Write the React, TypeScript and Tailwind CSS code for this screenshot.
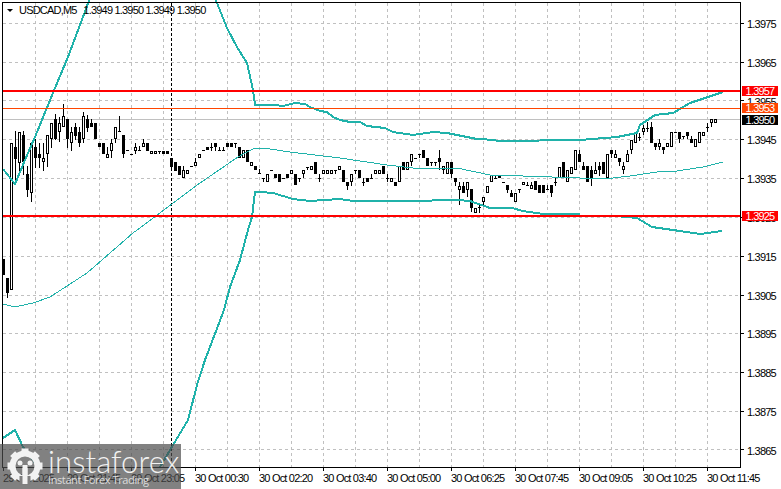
// top, bottom, high, low, filled (1 = black body)
type Candle = [number, number, number, number, number];

const candles: Candle[] = [
  [259, 275, 259, 275, 1], [278, 293, 278, 298, 1], [143, 290, 143, 290, 0], [147, 159, 131, 183, 1],
  [132, 163, 132, 175, 0], [135, 162, 131, 175, 1], [174, 190, 166, 197, 1], [143, 193, 143, 202, 0],
  [147, 158, 139, 168, 1], [154, 158, 143, 168, 1], [158, 162, 143, 171, 0], [135, 154, 135, 167, 0],
  [123, 139, 123, 148, 0], [119, 139, 114, 140, 1], [123, 132, 117, 142, 0], [116, 127, 104, 127, 0],
  [119, 139, 119, 148, 1], [132, 143, 127, 151, 0], [127, 136, 123, 140, 1], [132, 143, 127, 147, 1],
  [116, 139, 112, 143, 0], [119, 128, 115, 132, 1], [123, 127, 119, 127, 1], [123, 139, 123, 139, 1],
  [143, 147, 143, 147, 1], [143, 154, 143, 154, 1], [154, 158, 147, 158, 0], [143, 151, 139, 158, 0],
  [127, 139, 127, 143, 0], [131, 131, 116, 131, 0], [135, 154, 135, 158, 1], [150, 150, 150, 150, 0],
  [154, 154, 154, 154, 0], [147, 151, 143, 154, 0], [150, 150, 146, 151, 0], [143, 147, 139, 147, 0],
  [143, 151, 143, 151, 1], [151, 154, 151, 154, 0], [151, 154, 151, 154, 0], [151, 151, 151, 154, 0],
  [151, 154, 151, 154, 1], [151, 154, 151, 154, 1], [158, 167, 158, 171, 1], [162, 171, 162, 171, 1],
  [166, 175, 166, 175, 1], [170, 178, 166, 178, 0], [170, 174, 170, 174, 0], [166, 166, 166, 166, 0],
  [162, 166, 158, 166, 0], [154, 158, 154, 158, 0], [150, 150, 150, 150, 0], [147, 150, 147, 150, 1],
  [147, 147, 143, 151, 0], [143, 147, 143, 151, 1], [150, 150, 147, 150, 0], [150, 150, 147, 150, 0],
  [143, 147, 143, 147, 1], [143, 147, 143, 147, 1], [143, 143, 143, 148, 0], [147, 158, 147, 158, 1],
  [150, 158, 150, 158, 0], [150, 162, 150, 162, 1], [162, 166, 162, 166, 0], [166, 170, 166, 170, 1],
  [173, 173, 169, 173, 0], [178, 178, 178, 182, 0], [174, 182, 174, 182, 0], [170, 170, 170, 170, 0],
  [174, 178, 174, 178, 1], [174, 182, 174, 182, 1], [178, 178, 178, 178, 0], [174, 178, 174, 178, 1],
  [170, 174, 170, 174, 0], [174, 185, 174, 185, 1], [178, 178, 178, 182, 0], [170, 174, 170, 178, 0],
  [167, 167, 167, 170, 0], [166, 170, 166, 170, 0], [162, 174, 162, 174, 1], [178, 178, 174, 182, 0],
  [170, 174, 170, 174, 0], [170, 174, 170, 174, 0], [170, 174, 170, 174, 0], [170, 170, 170, 174, 0],
  [166, 170, 166, 170, 0], [170, 182, 170, 182, 1], [182, 186, 182, 190, 1], [174, 182, 174, 186, 0],
  [170, 170, 170, 174, 0], [170, 178, 170, 178, 1], [182, 182, 178, 186, 0], [178, 182, 178, 182, 1],
  [178, 178, 174, 178, 0], [170, 174, 170, 174, 0], [170, 174, 170, 174, 0], [166, 174, 166, 174, 1],
  [178, 178, 174, 182, 0], [178, 182, 178, 182, 0], [182, 186, 182, 186, 1], [166, 182, 166, 182, 0],
  [162, 170, 162, 170, 1], [162, 170, 162, 170, 0], [154, 162, 154, 166, 0], [158, 158, 158, 158, 0],
  [154, 154, 154, 158, 0], [150, 158, 150, 158, 1], [158, 166, 158, 166, 1], [162, 162, 162, 166, 0],
  [162, 162, 162, 166, 0], [158, 162, 150, 170, 1], [166, 170, 166, 174, 0], [162, 174, 162, 174, 0],
  [162, 174, 162, 178, 1], [178, 182, 178, 186, 1], [186, 190, 182, 205, 0], [186, 193, 182, 193, 1],
  [182, 190, 182, 197, 0], [189, 208, 189, 212, 1], [208, 213, 208, 213, 0], [207, 207, 205, 213, 0],
  [197, 202, 197, 207, 0], [186, 193, 186, 193, 0], [175, 182, 175, 182, 0], [178, 178, 175, 178, 0],
  [175, 178, 175, 178, 1], [182, 182, 182, 182, 0], [185, 190, 185, 193, 1], [193, 197, 190, 197, 1],
  [193, 202, 193, 202, 0], [189, 189, 189, 193, 0], [182, 185, 182, 185, 0], [185, 185, 182, 185, 0],
  [185, 189, 182, 189, 0], [181, 190, 181, 190, 1], [185, 193, 185, 193, 1], [185, 193, 185, 193, 1],
  [189, 189, 185, 189, 0], [185, 193, 185, 197, 1], [182, 182, 178, 186, 0], [167, 178, 167, 178, 0],
  [162, 178, 162, 178, 1], [170, 182, 170, 182, 0], [167, 174, 167, 174, 0], [150, 170, 150, 170, 0],
  [154, 162, 150, 162, 1], [166, 170, 162, 170, 1], [166, 182, 166, 182, 1], [170, 178, 166, 186, 1],
  [170, 174, 162, 174, 0], [166, 170, 162, 176, 1], [162, 174, 162, 174, 1], [154, 178, 154, 178, 0],
  [150, 154, 150, 158, 1], [154, 158, 150, 158, 0], [158, 162, 158, 166, 1], [166, 170, 162, 174, 0],
  [154, 162, 150, 162, 0], [140, 150, 140, 154, 0], [133, 143, 133, 143, 0], [137, 137, 133, 141, 0],
  [128, 132, 125, 135, 0], [128, 128, 122, 132, 0], [127, 143, 122, 143, 1], [143, 147, 143, 150, 1],
  [143, 147, 139, 150, 0], [147, 150, 147, 154, 1], [143, 147, 143, 147, 0], [132, 147, 132, 147, 0],
  [132, 132, 132, 132, 0], [132, 139, 132, 143, 1], [136, 136, 136, 139, 0], [132, 136, 132, 139, 1],
  [139, 143, 136, 143, 1], [139, 147, 139, 147, 0], [132, 143, 132, 143, 0], [132, 136, 132, 136, 0],
  [127, 127, 123, 132, 0], [119, 123, 119, 127, 0], [119, 123, 119, 123, 0],
];

const upperA = "3,169 15,184 25,160 35,137 55,88 68,57 90,-2";
const upperB =
  "215,-2 227,28 237,47 247,63 253,90 255,105 275,105 283,106 295,103 305,104 310,107 320,111 327,112 333,117 340,120 350,122 360,122 367,126 385,128 393,132 413,135 433,132 447,133 467,137 477,139 483,139 500,141 580,140 617,137 637,133 640,125 655,115 673,113 690,103 723,92";
const middle =
  "3,304 15,307 33,303 50,297 87,273 133,233 172,204 200,183 238,157 245,153 255,148 263,148 290,152 340,158 387,165 413,168 457,168 490,175 523,176 580,178 613,178 630,176 657,172 677,171 703,167 723,162";
const lowerA = "3,438 15,430 23,447 35,463 38,468";
const lowerB =
  "160,467 173,445 188,420 197,385 205,360 224,310 230,287 240,260 248,230 252,217 255,192 260,192 273,193 293,199 310,201 340,199 353,201 407,201 457,200 470,201 490,208 512,208 523,211 543,214 580,214";
const lowerC = "615,216 637,218 652,227 680,231 700,234 722,231";

const prices = ["1.3975", "1.3965", "1.3955", "1.3945", "1.3935", "1.3925", "1.3915", "1.3905", "1.3895", "1.3885", "1.3875", "1.3865"];
const times = [
  "29 Oct 2025", "29 Oct 21:45", "29 Oct 23:05", "30 Oct 00:30", "30 Oct 02:20", "30 Oct 03:40", "30 Oct 05:00",
  "30 Oct 06:25", "30 Oct 07:45", "30 Oct 09:05", "30 Oct 10:25", "30 Oct 11:45",
];
const gridY = [23, 62, 100, 139, 178, 217, 256, 295, 333, 372, 411, 449];
const gridX = Array.from({ length: 22 }, (_, i) => 35 + 32 * i);
const tickX = Array.from({ length: 12 }, (_, i) => 3 + 64 * i);
const gearTeeth = [0, 45, 90, 135, 180, 225, 270, 315];

function Chart() {
  return (
    <svg width="744" height="471" viewBox="0 0 744 471" className="block shrink-0" shapeRendering="crispEdges">
      {gridX.map((x) => (
        <line key={x} x1={x + 0.5} x2={x + 0.5} y1={3} y2={467} stroke="#c0c0c0" strokeDasharray="3 3" />
      ))}
      {gridY.map((y) => (
        <line key={y} x1={3} x2={740} y1={y + 0.5} y2={y + 0.5} stroke="#c0c0c0" strokeDasharray="3 3" />
      ))}
      <line x1={3} x2={740} y1={119.5} y2={119.5} stroke="#c0c0c0" />
      <line x1={171.5} x2={171.5} y1={3} y2={467} stroke="#000" strokeDasharray="3 2" />

      {candles.map(([t, b, h, l, filled], i) => {
        const c = 3 + 4 * i;
        return (
          <g key={i}>
            <rect x={c} y={h} width={1} height={Math.max(l - h, 1)} fill="#000" />
            <rect x={c - 1} y={t} width={3} height={Math.max(b - t, 1)} fill="#000" />
            {!filled && b - t > 2 && <rect x={c} y={t + 1} width={1} height={b - t - 2} fill="#fff" />}
          </g>
        );
      })}

      <g fill="none" stroke="#20b2aa">
        <polyline points={upperA} strokeWidth={2} />
        <polyline points={upperB} strokeWidth={2} />
        <polyline points={lowerA} strokeWidth={2} />
        <polyline points={lowerB} strokeWidth={2} />
        <polyline points={lowerC} strokeWidth={2} />
        <polyline points={middle} strokeWidth={1} />
      </g>

      <rect x={3} y={90} width={737} height={2} fill="#ff0000" />
      <rect x={3} y={215} width={737} height={2} fill="#ff0000" />
      <rect x={3} y={108} width={737} height={1} fill="#ff4500" />

      <rect x={2} y={2} width={739} height={1} fill="#000" />
      <rect x={2} y={2} width={1} height={466} fill="#000" />
      <rect x={740} y={2} width={1} height={466} fill="#000" />
      <rect x={2} y={467} width={739} height={1} fill="#000" />
      {gridY.map((y) => (
        <rect key={y} x={741} y={y} width={3} height={1} fill="#000" />
      ))}
      {tickX.map((x) => (
        <rect key={x} x={x} y={468} width={1} height={3} fill="#000" />
      ))}
    </svg>
  );
}

function PriceTag({ label, className }: { label: string; className: string }) {
  return (
    <div className={`absolute left-[742px] w-[36px] h-[10px] flex items-center justify-center leading-none ${className}`}>
      {label}
    </div>
  );
}

function Logo() {
  return (
    <div className="absolute left-0 bottom-0 w-[181px] h-[45px] bg-[#4b4b4b]/70 overflow-hidden">
      <div className="flex pl-[7px] pt-[4px] gap-[5px]">
        <svg width="36" height="37" viewBox="0 0 36 37" className="shrink-0">
          <circle cx="18" cy="18" r="12.5" fill="none" stroke="#f2f2f2" strokeWidth="6" />
          {gearTeeth.map((a) => (
            <rect key={a} x="14.5" y="0.5" width="7" height="6" fill="#f2f2f2" transform={`rotate(${a} 18 18)`} />
          ))}
          <circle cx="13" cy="15" r="2.5" fill="#f2f2f2" />
          <circle cx="23" cy="15" r="2.5" fill="#f2f2f2" />
          <rect x="15.5" y="17" width="5" height="19" fill="#f2f2f2" />
          <rect x="12.5" y="28" width="11" height="9" fill="#7f7f7f" />
          <rect x="15.5" y="20" width="5" height="16" fill="#f2f2f2" />
        </svg>
        <div className="flex flex-col text-[#f2f2f2]">
          <span className="font-['Lato','Open_Sans',sans-serif] font-light text-[31px] leading-[26px] tracking-[0.1px]">
            instaforex
          </span>
          <span className="font-['Open_Sans',sans-serif] text-[11px] leading-[11px] tracking-[-0.4px] text-[#dcdcdc]">
            Instant Forex Trading
          </span>
        </div>
      </div>
    </div>
  );
}

export default function App() {
  return (
    <div className="relative w-[781px] h-[489px] bg-white overflow-hidden text-black font-['Liberation_Sans',sans-serif] text-[11px] tracking-[-0.8px]">
      <div className="flex h-[471px]">
        <Chart />
        <div className="pt-[18px] pl-[3px] leading-[12px]">
          {prices.map((p) => (
            <div key={p} className="h-[38.8px]">
              {p}
            </div>
          ))}
        </div>
      </div>

      <div className="flex pl-[3px] leading-[14px]">
        {times.map((t) => (
          <div key={t} className="w-[64px] shrink-0 whitespace-nowrap">
            {t}
          </div>
        ))}
      </div>

      <div className="absolute left-[7px] top-[3px] flex items-center gap-[6px] leading-[14px]">
        <div className="w-0 h-0 border-x-[3px] border-t-[3px] border-x-transparent border-t-black" />
        <span className="whitespace-pre">USDCAD,M5   1.3949 1.3950 1.3949 1.3950</span>
      </div>

      <PriceTag label="1.3957" className="top-[86px] bg-[#ff0000] text-white" />
      <PriceTag label="1.3953" className="top-[103px] bg-[#ff4500] text-white" />
      <PriceTag label="1.3950" className="top-[115px] bg-black text-white" />
      <PriceTag label="1.3925" className="top-[211px] bg-[#ff0000] text-white" />

      <Logo />
    </div>
  );
}
